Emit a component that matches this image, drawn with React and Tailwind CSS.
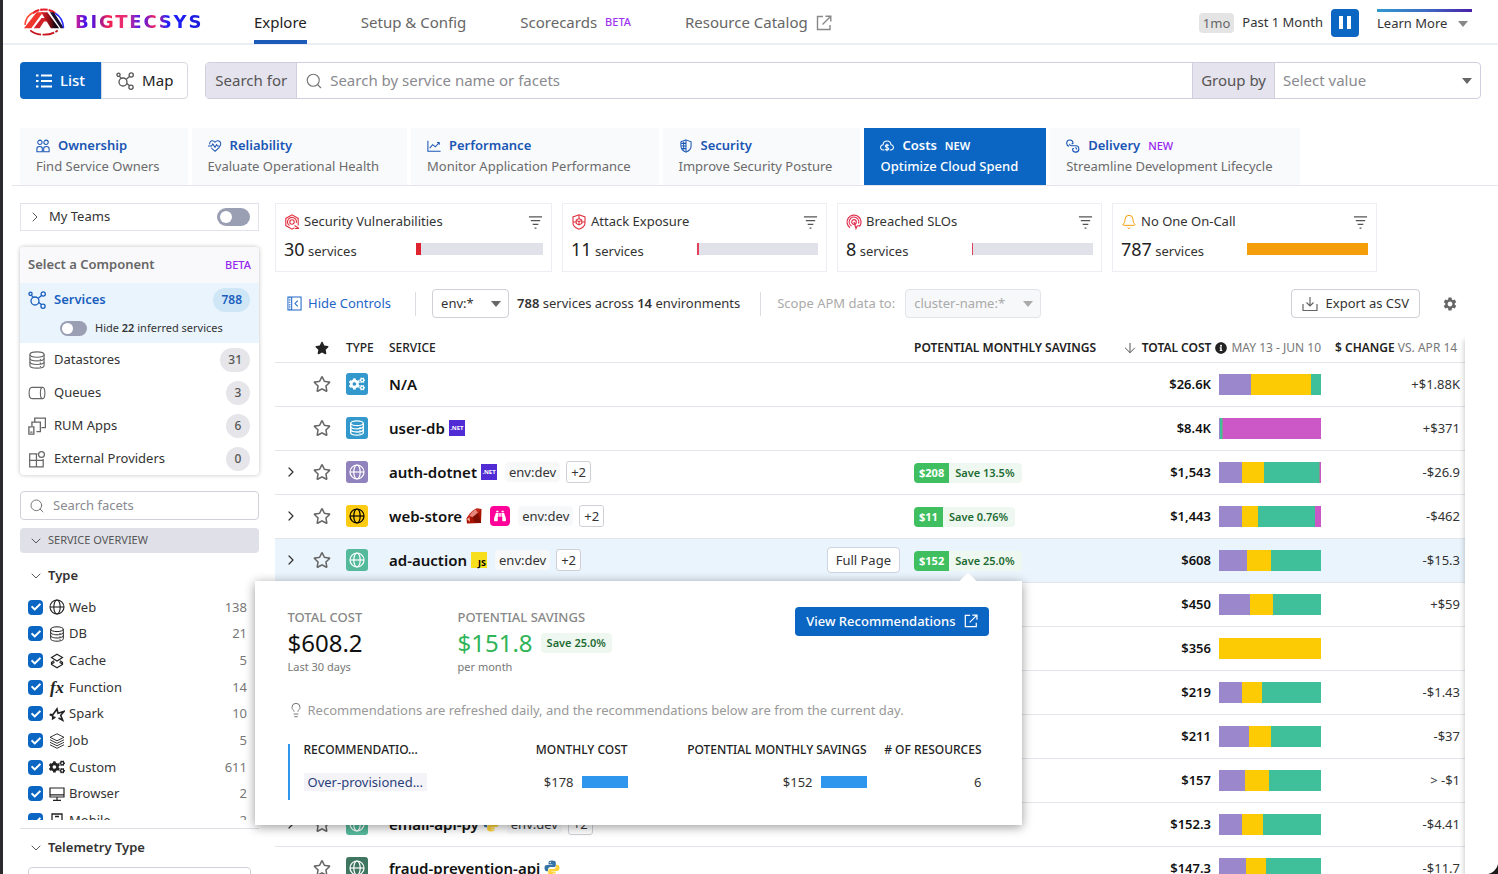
import React from "react";
import { FaCheck, FaStar, FaRegStar, FaBinoculars, FaCogs, FaInfoCircle } from "react-icons/fa";
import { MdSettings } from "react-icons/md";
import {
  ArrowDown,
  Bell,
  ChevronDown,
  ChevronRight,
  Lightbulb,
  Search,
} from "lucide-react";

function Svg({ className = "size-4", box = 16, sw = 1, children }) {
  return (
    <svg
      className={`shrink-0 ${className}`}
      viewBox={`0 0 ${box} ${box}`}
      fill="none"
      stroke="currentColor"
      strokeWidth={sw}
      aria-hidden="true"
    >
      {children}
    </svg>
  );
}

const Globe = (p) => (
  <Svg sw={1.1} {...p}>
    <circle cx="8" cy="8" r="7" />
    <ellipse cx="8" cy="8" rx="3.2" ry="7" />
    <path d="M1 8h14" />
  </Svg>
);

const Disks = (p) => (
  <Svg {...p}>
    <ellipse cx="8" cy="3.2" rx="6.3" ry="2.4" />
    <path d="M1.7 3.2v9.6c0 1.3 2.8 2.4 6.3 2.4s6.3-1.1 6.3-2.4V3.2" />
    <path d="M1.7 6.4c0 1.3 2.8 2.4 6.3 2.4s6.3-1.1 6.3-2.4M1.7 9.6c0 1.3 2.8 2.4 6.3 2.4s6.3-1.1 6.3-2.4" />
    <path d="M11 7v1.3M11 10.3v1.3M11 13.3v1" />
  </Svg>
);

const Nodes = (p) => (
  <Svg box={18} sw={1.3} {...p}>
    <circle cx="7" cy="10" r="4" />
    <circle cx="2.5" cy="2.8" r="1.6" />
    <circle cx="15.2" cy="3" r="2.1" />
    <circle cx="15" cy="15.2" r="2.1" />
    <path d="M3.4 4.2 5 6.5M13.6 4.4 10 7.4M10.7 11.4l2.7 2.2" />
  </Svg>
);

const External = (p) => (
  <Svg sw={1.4} {...p}>
    <path d="M7 1.5H1.5v13h12.5V10" />
    <path d="M6.500 9.500 14.500 1.500M9.500 1.200h5.300v5.300" />
  </Svg>
);

const ListIcon = (p) => (
  <Svg sw={1.8} {...p}>
    <path d="M5 2.5h11M5 8h11M5 13.5h11M0 2.5h2.5M0 8h2.5M0 13.5h2.5" />
  </Svg>
);

const People = (p) => (
  <Svg sw={1.200} {...p}>
    <circle cx="4.5" cy="3.800" r="2.500" />
    <circle cx="11.500" cy="3.800" r="2.500" />
    <path d="M1 14.500V11c0-1.700 1-2.500 3.200-2.500s3 .8 3 2.500v3.500ZM8.800 14.500V11c0-1.700 1-2.500 3-2.500s3.200.8 3.200 2.500v3.500Z" />
  </Svg>
);

const HeartPulse = (p) => (
  <Svg sw={1.200} {...p}>
    <path d="M2 6.2C1.4 3.6 3.2 2 5 2c1.400 0 2.300.8 3 1.700C8.700 2.800 9.600 2 11 2c2.300 0 4.100 2 3.400 4.500C13.700 9.500 10 12.500 8 14 6.800 13 5 11.700 3.600 10" />
    <path d="M0 8h4l1.500-2.300L8 9.500l1.800-3L11 8h2" />
  </Svg>
);

const Trend = (p) => (
  <Svg sw={1.2} {...p}>
    <path d="M1 2v12h14.500M3 10.500l3.500-4 3 2.500L14 4M11.500 4H14v2.500" />
  </Svg>
);

const Shield = (p) => (
  <Svg sw={1.2} {...p}>
    <path d="M8 1 13.800 3.200V8c0 3.500-2.500 5.700-5.800 7-3.300-1.300-5.800-3.500-5.800-7V3.200Z" />
    <path d="M8 1v14M2.500 5H8M2.500 8H8M3.500 11H8M5.300 3v9" />
  </Svg>
);

const CloudCost = (p) => (
  <Svg sw={1.2} {...p}>
    <path d="M5 12.500H3.800a3 3 0 0 1-.3-6C3.800 4 5.700 2.300 8 2.300S12.200 4 12.500 6.500a3 3 0 0 1-.3 6H11" />
    <path d="M10 7.700c-.4-.7-1.100-1-2-1-1.100 0-1.900.5-1.900 1.400 0 2.200 3.900.9 3.900 3 0 .9-.9 1.400-2 1.400-.9 0-1.700-.4-2-1.100M8 5.500v8.500" />
  </Svg>
);

const Loop = (p) => (
  <Svg sw={1.2} {...p}>
    <path d="M3.500 8.200A3.600 3.600 0 1 1 8 4.500c0 1.200-1 1.200-1.500.5M4 5.500C4.200 7 5 7.800 6.500 7.800h4.500a3.600 3.600 0 1 1-3.500 4c0-1.200 1-1.300 1.600-.6" />
    <path d="M12.300 12c0-1.200-.8-2-2-2" />
  </Svg>
);

const Queue = (p) => (
  <Svg {...p}>
    <path d="M3.500 3h9.500c1.100 0 2 2.200 2 5s-.9 5-2 5H3.500C2 13 1 11 1 8s1-5 2.500-5Z" />
    <path d="M13 3c-1.100 0-2 2.200-2 5s.9 5 2 5" />
  </Svg>
);

const Screens = (p) => (
  <Svg sw={1.2} {...p}>
    <path d="M6 4.500V1h9.500v8.500H12M3.500 8V4.500H11v8.500H7.500" />
    <path d="M.8 8.800h4.400v6.400H.8zM2 13.500h2" />
  </Svg>
);

const Blocks = (p) => (
  <Svg sw={1.1} {...p}>
    <path d="M8.500 3.500h-7v11.500h12V8M1.500 9.300h12M7.500 3.500V15" />
    <circle cx="12" cy="4" r="2.600" />
  </Svg>
);

const Cache = (p) => (
  <Svg sw={1.2} {...p}>
    <path d="M8 1.200 13.500 4.600 8 8 2.500 4.600Z" />
    <path d="M5.200 7.700 2.500 9.300v2.200L8 14.800l5.500-3.300V9.300l-2.700-1.600M2.500 11 5.500 9.300M13.500 11l-3-1.700" />
  </Svg>
);

const Spark = (p) => (
  <Svg sw={1.6} {...p}>
    <path d="M.8 8.500 4.200 8.300 8 3l1 4.300 6-1.800-3.300 3.800 2 4.900-4.200-2.200" />
    <path d="M.8 8.500 4 10.200l-.3 2.500 2.700-1.700" />
  </Svg>
);

const Stack = (p) => (
  <Svg sw={0.9} {...p}>
    <path d="M8 .8 15 4.300 8 7.800 1 4.300ZM1 6.800l7 3.500 7-3.500M1 9.300l7 3.500 7-3.500M1 11.800l7 3.500 7-3.500" />
  </Svg>
);

const Monitor = (p) => (
  <Svg sw={1.2} {...p}>
    <path d="M1 2h14v9H1zM1 8.800h14M8 11v3M4 14.300h8" />
  </Svg>
);

const Phone = (p) => (
  <Svg sw={1.3} {...p}>
    <path d="M3 1h10v14H3zM6 3.500h4" />
  </Svg>
);

const HexTarget = (p) => (
  <Svg sw={1.1} {...p}>
    <path d="M10.500 13.800 8 15.200 1.800 11.600V4.400L8 .8l6.200 3.600v7.200" />
    <circle cx="8" cy="8" r="2.200" />
    <path d="m10.500 11.500 4.500 3M11 14.500h4M5.500 11.500A4.400 4.400 0 1 1 12.300 8.800" />
  </Svg>
);

const ShieldBug = (p) => (
  <Svg sw={1.1} {...p}>
    <path d="M8 .8 14 3v6c0 3-2.500 5-6 6.200C4.500 14 2 12 2 9V3Z" />
    <path d="M8 4.500 10.800 6v3.500L8 11l-2.800-1.500V6ZM8 11V8M5.200 6 8 7.800 10.800 6M8 4.500V1M2 8h3M14 8h-3" />
  </Svg>
);

const Target = (p) => (
  <Svg sw={1.2} {...p}>
    <path d="M4 13.800A7 7 0 1 1 13.500 12.500M5.500 12A4.800 4.800 0 1 1 12.500 9.500" />
    <circle cx="8" cy="8" r="2.300" />
    <path d="M8 8l2 6.500 1.200-2.500 2.800-.5" />
  </Svg>
);

const Download = (p) => (
  <Svg sw={1.2} {...p}>
    <path d="M1 8v6.500h14V8M8 1v9M4.500 6.500 8 10l3.500-3.500" />
  </Svg>
);

const HidePanel = (p) => (
  <Svg sw={1.1} {...p}>
    <path d="M1 1h14v14H1zM5 1v14M11.500 5 8.500 8l3 3" />
    <path d="M3 1v14" strokeDasharray="1.500 1" />
  </Svg>
);

const FilterLines = (p) => (
  <Svg sw={1.5} {...p}>
    <path d="M1 2h14M3 6h10M5 10h6M7 14h2" />
  </Svg>
);

const Caret = ({ className = "text-[#666]" }) => (
  <svg className={`w-[10px] shrink-0 ${className}`} viewBox="0 0 10 6" fill="currentColor" aria-hidden="true">
    <path d="M0 0h10L5 6z" />
  </svg>
);

const Python = () => (
  <svg className="size-4 shrink-0" viewBox="0 0 16 16" aria-hidden="true">
    <path fill="#3572a5" d="M8 .5c-2.500 0-3.500.8-3.500 2.200V4.500H8.500V5H3C1.300 5 .5 6.300.5 8s.8 3.200 2.200 3.200H4V9.500C4 8 5.200 7 6.500 7h3.700c1 0 1.600-.8 1.600-1.800V2.700C11.800 1.300 10.500.5 8 .5Z" />
    <path fill="#ffd43b" d="M8 15.500c2.500 0 3.500-.8 3.500-2.200v-1.800H7.500V11H13c1.700 0 2.500-1.300 2.500-3s-.8-3.200-2.200-3.200H12v1.700C12 8 10.800 9 9.500 9H5.800c-1 0-1.600.8-1.600 1.800v2.500c0 1.400 1.300 2.200 3.800 2.200Z" />
    <circle cx="6.200" cy="2.500" r=".7" fill="#fff" />
    <circle cx="9.800" cy="13.500" r=".7" fill="#fff" />
  </svg>
);

const Ruby = () => (
  <svg className="size-4 shrink-0" viewBox="0 0 16 16" aria-hidden="true">
    <path fill="#a91401" d="M10.500.5 15.500 1 15 15 1 15.500.5 10.500Z" />
    <path fill="#c3271b" d="M10.500.5 15.500 1 12 5 7 9 .5 10.500C3 6 6 2 10.500.5Z" />
    <path fill="#f1a79b" d="M9.500 1.500 12 4.500 7 9 3.500 8C5 5 7 2.500 9.500 1.500Z" opacity=".75" />
    <path fill="#7d0f02" d="M7 9l5-4 3 10-7-1Z" />
    <path fill="#f6b5a8" d="m1 11 2.500-1.500.5 4.500Z" />
  </svg>
);

const DotNet = () => (
  <span className="flex size-4 items-center justify-center bg-[#512bd4] text-[6px] font-bold leading-none text-white">.NET</span>
);

const Js = () => (
  <span className="flex size-4 items-end justify-end bg-[#f7df1e] pr-px text-[9px] font-bold leading-[10px] text-black">JS</span>
);

const Binoculars = () => (
  <span className="ml-2 flex size-5 items-center justify-center rounded bg-[#ff0099] text-white">
    <FaBinoculars className="size-3" />
  </span>
);

function Logo() {
  return (
    <a href="#home" className="flex w-[231px] shrink-0 items-center gap-2.5" aria-label="BIGTECSYS home">
      <svg className="h-7 w-[42px]" viewBox="0 0 43 28" aria-hidden="true">
        <defs>
          <linearGradient id="ring" x1="0" x2="1">
            <stop offset="0" stopColor="#e5202a" />
            <stop offset=".45" stopColor="#8e1018" />
            <stop offset=".75" stopColor="#1c0714" />
            <stop offset="1" stopColor="#12061c" />
          </linearGradient>
        </defs>
        <path d="M10 5C13 2.500 17 1.200 21.500 1.200S30 2.500 33 5" fill="none" stroke="#e5202a" strokeWidth="2.200" strokeDasharray="7.500 1" />
        <path d="M7.500 22.500C11 25.500 16 27 21.500 27S32 25.500 35.500 22.500" fill="none" stroke="#c9141f" strokeWidth="1.800" strokeDasharray="12 1.500" />
        <path d="M1 20.500 14 4h6.500L8.500 20.500Z" fill="#f0362c" />
        <path d="M11 20.500 19 10h4l2.500 3.500h-4L17 20.500Z" fill="#d3202a" />
        <path d="M18.500 4H25l12 16.500h-8.500Z" fill="url(#ring)" />
        <path d="M27.500 4h4L42 20.500h-3.500Z" fill="#1b0f2e" />
        <path d="M33 5c5 3 8 8 8.500 15" fill="none" stroke="#2a2cff" strokeWidth="1.600" />
        <path d="M2 17C2.500 11.500 5 7 10 4.500" fill="none" stroke="#ff4a35" strokeWidth="1.600" />
      </svg>
      <span className="bg-[linear-gradient(90deg,#e0208a_0%,#2a10ff_10%,#f01f50_26%,#e8307a_40%,#3a18ff_52%,#f02060_62%,#2020ff_72%,#1b1bd8_100%)] bg-clip-text font-['DejaVu_Sans'] text-lg font-bold leading-5 tracking-widest text-transparent">
        BIGTECSYS
      </span>
    </a>
  );
}

function Header() {
  return (
    <header className="flex h-[45px] shrink-0 items-stretch border-b-2 border-[#eceef5] pl-5 pr-[26px]">
      <Logo />
      <nav className="flex flex-1 items-stretch gap-[54px] text-[15px] text-[#666]">
        <a href="#explore" className="-mb-px flex items-center border-b-4 border-[#1c5cb8] pt-1 text-[#222]">Explore</a>
        <a href="#setup" className="flex items-center pt-0.5">Setup &amp; Config</a>
        <a href="#scorecards" className="flex items-center gap-2 pt-0.5">
          Scorecards <span className="text-[11px] font-medium text-[#a033f0]">BETA</span>
        </a>
        <a href="#catalog" className="flex items-center gap-2 pt-0.5">
          Resource Catalog <External className="size-4 text-[#888]" />
        </a>
      </nav>
      <div className="flex items-center gap-2 pt-0.5 text-[13px] text-[#333]">
        <span className="rounded-sm bg-[#e4e4e4] px-1 leading-5 text-[#666]">1mo</span>
        <span>Past 1 Month</span>
        <button type="button" aria-label="Pause" className="flex size-7 items-center justify-center gap-1 rounded bg-[#0b66c3]">
          <span className="h-[13px] w-1 bg-white" />
          <span className="h-[13px] w-1 bg-white" />
        </button>
        <button type="button" className="ml-2.5 flex h-7 w-[95px] items-center justify-between border-t-[3px] border-[#3a6fc0] pr-1 [border-image:linear-gradient(90deg,#2f9bd0,#3d6cc4,#4a1fa8)_1_/_3px_0_0_0]">
          Learn More <Caret className="text-[#888]" />
        </button>
      </div>
    </header>
  );
}

function Toolbar() {
  return (
    <div className="flex h-[37px] items-stretch gap-[17px] pr-[17px] text-[15px]">
      <div className="flex">
        <button type="button" className="flex items-center gap-2 rounded-l bg-[#0b66c3] px-4 font-medium text-white">
          <ListIcon /> List
        </button>
        <button type="button" className="flex items-center gap-2 rounded-r border border-[#d8d8e2] px-3.5 text-[#222]">
          <Nodes className="size-[18px] text-[#555]" /> Map
        </button>
      </div>
      <div className="flex flex-1 items-stretch rounded border border-[#cfcfdf]">
        <label htmlFor="svc-search" className="flex items-center border-r border-[#cfcfdf] bg-[#e5e3ee] px-[9px] text-[#555]">Search for</label>
        <div className="flex flex-1 items-center gap-[7px] px-2">
          <Search className="size-[18px] text-[#777]" strokeWidth={1.5} />
          <input id="svc-search" className="flex-1 outline-none placeholder:text-[#8a8a90]" placeholder="Search by service name or facets" />
        </div>
        <label htmlFor="group-by" className="flex items-center border-x border-[#cfcfdf] bg-[#e5e3ee] px-2 text-[#555]">Group by</label>
        <div className="grid w-[205px] items-center">
          <select id="group-by" className="col-start-1 row-start-1 h-full appearance-none px-2 text-[#8a8a90] outline-none">
            <option>Select value</option>
          </select>
          <span className="pointer-events-none col-start-1 row-start-1 justify-self-end pr-2"><Caret /></span>
        </div>
      </div>
    </div>
  );
}

const TABS = [
  { name: "Ownership", desc: "Find Service Owners", Icon: People },
  { name: "Reliability", desc: "Evaluate Operational Health", Icon: HeartPulse },
  { name: "Performance", desc: "Monitor Application Performance", Icon: Trend },
  { name: "Security", desc: "Improve Security Posture", Icon: Shield },
  { name: "Costs", desc: "Optimize Cloud Spend", Icon: CloudCost, tag: "NEW", active: true },
  { name: "Delivery", desc: "Streamline Development Lifecycle", Icon: Loop, tag: "NEW" },
];

function Tabs() {
  return (
    <div className="-ml-2 flex gap-1 border-b border-[#e4e6ec] pl-2 text-[13px]">
      {TABS.map(({ name, desc, Icon, tag, active }) => (
        <button
          key={name}
          type="button"
          className={`flex h-[57px] flex-col justify-center pb-px pl-4 pr-7 text-left leading-[21px] ${active ? "bg-[#0b66c3] font-medium text-white" : "bg-[#f9fafc] text-[#6b6b6b]"}`}
        >
          <span className={`flex items-center gap-2 font-semibold ${active ? "text-white" : "text-[#1a56b4]"}`}>
            <Icon className="size-3.5" /> {name}
            {tag && <span className={`text-[11px] ${active ? "" : "font-medium text-[#9526f0]"}`}>{tag}</span>}
          </span>
          <span>{desc}</span>
        </button>
      ))}
    </div>
  );
}

function Switch({ label, small }) {
  return (
    <input
      type="checkbox"
      role="switch"
      aria-label={label}
      className={`shrink-0 appearance-none rounded-full bg-[#9a9fb4] before:block before:rounded-full before:bg-white ${small ? "h-[15px] w-[27px] p-[2px] before:size-[11px]" : "h-[18px] w-[33px] p-[3px] before:size-3"}`}
    />
  );
}

const COMPONENTS = [
  { name: "Datastores", count: 31, Icon: Disks },
  { name: "Queues", count: 3, Icon: Queue },
  { name: "RUM Apps", count: 6, Icon: Screens },
  { name: "External Providers", count: 0, Icon: Blocks },
];

const Fx = () => (
  <span className="w-4 text-center font-['Liberation_Serif'] text-[17px] font-bold italic leading-none">fx</span>
);
const Cogs = () => <FaCogs className="size-4" />;

const TYPES = [
  ["Web", 138, Globe],
  ["DB", 21, Disks],
  ["Cache", 5, Cache],
  ["Function", 14, Fx],
  ["Spark", 10, Spark],
  ["Job", 5, Stack],
  ["Custom", 611, Cogs],
  ["Browser", 2, Monitor],
  ["Mobile", 2, Phone],
];

function Sidebar() {
  return (
    <aside className="w-[239px] shrink-0 text-[13px] text-[#333]">
      <div className="flex h-7 items-center border border-[#e2e3ea] px-2">
        <ChevronRight className="-ml-0.5 size-4 text-[#555]" strokeWidth={1.5} />
        <span className="ml-1.5 flex-1">My Teams</span>
        <Switch label="My Teams" />
      </div>

      <section className="mt-4 overflow-hidden rounded-sm shadow-[0_0_4px_rgba(0,0,0,0.25)]">
        <div className="flex h-9 items-center justify-between bg-[#f9f9fb] px-2">
          <h2 className="font-semibold text-[#666]">Select a Component</h2>
          <span className="text-[11px] font-medium text-[#9526f0]">BETA</span>
        </div>
        <div className="h-[60px] bg-[#eaf4fc] pl-2 pr-[9px]">
          <div className="flex h-[34px] items-center text-[#1a5fbf]">
            <Nodes className="size-[18px]" />
            <span className="ml-2 flex-1 font-semibold">Services</span>
            <span className="rounded-full bg-[#cfe6f7] px-2 text-xs font-semibold leading-6">788</span>
          </div>
          <div className="flex h-[22px] items-center pl-8 text-[11px]">
            <Switch small label="Hide inferred services" />
            <span className="ml-2">Hide <b className="font-semibold">22</b> inferred services</span>
          </div>
        </div>
        <ul>
          {COMPONENTS.map(({ name, count, Icon }) => (
            <li key={name} className="flex h-[33px] items-center pl-2 pr-[9px]">
              <Icon className="size-[18px] text-[#666]" />
              <span className="ml-2 flex-1">{name}</span>
              <span className="min-w-6 rounded-full bg-[#e5e5ea] px-2 text-center text-xs font-medium leading-6 text-[#555]">{count}</span>
            </li>
          ))}
        </ul>
      </section>

      <label className="mt-4 flex h-[29px] items-center gap-2 rounded-sm border border-[#d0d0da] px-2">
        <Search className="size-4 text-[#777]" strokeWidth={1.5} />
        <input aria-label="Search facets" placeholder="Search facets" className="min-w-0 flex-1 outline-none placeholder:text-[#8a8a90]" />
      </label>
      <button type="button" className="mt-2 flex h-[25px] w-full items-center gap-1.5 rounded-sm bg-[#e0e1e8] pl-2 text-[11px] text-[#555]">
        <ChevronDown className="-mr-0.5 size-4" strokeWidth={1.5} /> SERVICE OVERVIEW
      </button>

      <button type="button" className="mt-3 flex h-[22px] items-center gap-1.5 pl-2 font-semibold text-[#333]">
        <ChevronDown className="-mr-0.5 size-4 text-[#555]" strokeWidth={1.5} /> Type
      </button>
      <div className="mt-[7px] h-[226px] overflow-hidden">
        <ul className="grid h-[240px] grid-rows-9 pl-2 pr-3">
          {TYPES.map(([name, count, Icon]) => (
            <li key={name}>
              <label className="flex h-full items-center">
                <span className="grid size-[15px] place-items-center">
                  <input type="checkbox" defaultChecked className="col-start-1 row-start-1 size-[15px] appearance-none rounded-sm bg-[#0b66c3]" />
                  <FaCheck className="pointer-events-none col-start-1 row-start-1 size-2.5 text-white" />
                </span>
                <span className="ml-1.5 mr-1 flex w-4 justify-center text-[#222]"><Icon /></span>
                <span className="flex-1">{name}</span>
                <span className="text-[#777]">{count}</span>
              </label>
            </li>
          ))}
        </ul>
      </div>
      <div className="mt-2 border-t border-[#dfe0e6] pt-2">
        <button type="button" className="flex h-[22px] items-center gap-1.5 pl-2 font-semibold text-[#333]">
          <ChevronDown className="-mr-0.5 size-4 text-[#555]" strokeWidth={1.5} /> Telemetry Type
        </button>
        <label className="mx-2 mt-2 flex h-[29px] items-center gap-2 rounded-sm border border-[#d0d0da] px-2">
          <Search className="size-4 text-[#777]" strokeWidth={1.5} />
          <input aria-label="Search telemetry types" className="min-w-0 flex-1 outline-none" />
        </label>
      </div>
    </aside>
  );
}

const BellIcon = () => <Bell className="size-4" strokeWidth={1.5} />;

const CARDS = [
  { name: "Security Vulnerabilities", value: 30, color: "#e0242f", tone: "text-[#e0303f]", share: 4, Icon: HexTarget },
  { name: "Attack Exposure", value: 11, color: "#e0425a", tone: "text-[#e0303f]", share: 1.4, Icon: ShieldBug },
  { name: "Breached SLOs", value: 8, color: "#e0425a", tone: "text-[#e0304f]", share: 1, Icon: Target },
  { name: "No One On-Call", value: 787, color: "#f59e0b", tone: "text-[#f59e0b]", share: 100, Icon: BellIcon },
];

function Cards() {
  return (
    <div className="mr-[121px] grid grid-cols-[277fr_265fr_265fr_265fr] gap-2.5 text-[13px] text-[#333]">
      {CARDS.map(({ name, value, color, tone, share, Icon }) => (
        <div key={name} className="h-[69px] border border-[#eceef4] px-2 pt-2">
          <div className="flex h-5 items-center gap-1">
            <span className={tone}><Icon className="size-4" /></span>
            <span className="flex-1">{name}</span>
            <button type="button" aria-label={`Filter by ${name}`} className="text-[#555]"><FilterLines className="size-[15px]" /></button>
          </div>
          <div className="mt-1 flex h-[26px] items-center justify-between">
            <span className="leading-6"><span className="text-lg text-[#222]">{value}</span> services</span>
            <span className="h-3 w-[49%] bg-[#e1e2e9]">
              <span className="block h-full" style={{ width: `${share}%`, background: color }} />
            </span>
          </div>
        </div>
      ))}
    </div>
  );
}

function Controls() {
  return (
    <div className="mt-[17px] flex h-[29px] items-center pl-3 pr-[7px] text-[13px] text-[#333]">
      <button type="button" className="flex items-center gap-1.5 text-[#1f66c8]"><HidePanel className="size-[15px]" /> Hide Controls</button>
      <span className="ml-6 h-6 w-px bg-[#dcdde3]" />
      <div className="ml-4 grid w-[77px] items-center self-stretch">
        <select aria-label="Environment" className="col-start-1 row-start-1 h-full appearance-none rounded border border-[#cfcfd6] px-2 outline-none">
          <option>env:*</option>
        </select>
        <span className="pointer-events-none col-start-1 row-start-1 justify-self-end pr-2"><Caret /></span>
      </div>
      <span className="ml-2"><b className="font-semibold">788</b> services across <b className="font-semibold">14</b> environments</span>
      <span className="ml-5 h-6 w-px bg-[#dcdde3]" />
      <label htmlFor="scope" className="ml-4 text-[#aaa]">Scope APM data to:</label>
      <div className="ml-2.5 grid w-[136px] items-center self-stretch">
        <select id="scope" disabled className="col-start-1 row-start-1 h-full appearance-none rounded-sm border border-[#e2e4ea] bg-[#f7f8fa] px-2 text-[#aaa] opacity-100 outline-none">
          <option>cluster-name:*</option>
        </select>
        <span className="pointer-events-none col-start-1 row-start-1 justify-self-end pr-2"><Caret className="text-[#aaa]" /></span>
      </div>
      <span className="flex-1" />
      <button type="button" className="flex items-center gap-2 self-stretch rounded border border-[#cfcfd6] px-2.5"><Download className="size-4 text-[#666]" /> Export as CSV</button>
      <button type="button" aria-label="Settings" className="ml-[22px] text-[#666]"><MdSettings className="size-4" /></button>
    </div>
  );
}

const V = "#9a87cc";
const Y = "#fccb04";
const G = "#40c09a";
const M = "#cc58c8";

const std = (a, b) => [[V, a], [Y, b], [G, 102 - a - b]];

const ROWS = [
  { name: "N/A", tile: "bg-[#3398cb] text-white", kind: "cogs", cost: "$26.6K", bar: [[V, 32], [Y, 60], [G, 10]], change: "+$1.88K" },
  { name: "user-db", tile: "bg-[#3398cb] text-white", kind: "db", badges: [DotNet], cost: "$8.4K", bar: [[V, 1], [G, 2], ["#8f8f8f", 1], [M, 98]], change: "+$371" },
  { name: "auth-dotnet", tile: "bg-[#8f82bd] text-white", open: true, badges: [DotNet], env: true, save: ["$208", "Save 13.5%"], cost: "$1,543", bar: [[V, 23], [Y, 22], [G, 55], ["#8f8f8f", 1], [M, 1]], change: "-$26.9" },
  { name: "web-store", tile: "bg-[#fccb12] text-black", open: true, badges: [Ruby, Binoculars], env: true, save: ["$11", "Save 0.76%"], cost: "$1,443", bar: [[V, 23], [Y, 16], [G, 57], [M, 6]], change: "-$462" },
  { name: "ad-auction", tile: "bg-[#55b99b] text-white", open: true, badges: [Js], env: true, save: ["$152", "Save 25.0%"], cost: "$608", bar: std(28, 24), change: "-$15.3", active: true },
  { name: "ads-service", tile: "bg-[#55b99b] text-white", cost: "$450", bar: std(31, 23), change: "+$59" },
  { name: "storage", tile: "bg-[#55b99b] text-white", cost: "$356", bar: [[Y, 102]], change: "" },
  { name: "checkout", tile: "bg-[#55b99b] text-white", cost: "$219", bar: std(23, 20), change: "-$1.43" },
  { name: "discounts", tile: "bg-[#55b99b] text-white", cost: "$211", bar: std(30, 22), change: "-$37" },
  { name: "orders", tile: "bg-[#55b99b] text-white", cost: "$157", bar: std(26, 24), change: "> -$1" },
  { name: "email-api-py", tile: "bg-[#55b99b] text-white", open: true, badges: [Python], env: true, cost: "$152.3", bar: std(23, 21), change: "-$4.41" },
  { name: "fraud-prevention-api", tile: "bg-[#3f7660] text-white", badges: [Python], cost: "$147.3", bar: std(27, 20), change: "-$11.7" },
];

function Popover() {
  return (
    <div className="absolute right-0 top-full z-20 mt-[10px] w-[767px] bg-white px-[33px] pb-[25px] pt-[26px] font-normal shadow-[0_2px_10px_rgba(0,0,0,0.4)]">
      <span className="absolute -top-1.5 right-[48px] size-3 rotate-45 bg-white" />
      <div className="flex items-start">
        <div className="w-[170px]">
          <div className="text-[13px] font-medium leading-5 text-[#888]">TOTAL COST</div>
          <div className="text-2xl leading-8 text-[#111]">$608.2</div>
          <div className="text-[11px] leading-4 text-[#777]">Last 30 days</div>
        </div>
        <div className="flex-1">
          <div className="text-[13px] font-medium leading-5 text-[#888]">POTENTIAL SAVINGS</div>
          <div className="flex items-center gap-2 text-2xl leading-8 text-[#2fb457]">
            $151.8
            <span className="rounded-sm bg-[#eff8f0] px-1.5 text-[11px] font-semibold leading-5 text-[#1f6b34]">Save 25.0%</span>
          </div>
          <div className="text-[11px] leading-4 text-[#777]">per month</div>
        </div>
        <button type="button" className="flex h-[29px] items-center gap-2 rounded-sm bg-[#0b66c3] px-[11px] text-[13px] font-medium text-white">
          View Recommendations <External className="size-3.5" />
        </button>
      </div>
      <p className="mt-[25px] flex items-center gap-1 text-[13px] leading-5 text-[#999]">
        <Lightbulb className="size-4 text-[#777]" strokeWidth={1.5} />
        Recommendations are refreshed daily, and the recommendations below are from the current day.
      </p>
      <div className="mt-6 border-l-2 border-[#2f96ee] pl-3.5 pr-[7px]">
        <table className="w-full table-fixed text-right text-[13px] text-[#333]">
          <thead>
            <tr className="h-3 text-xs text-[#222]">
              <th className="w-[130px] text-left font-medium leading-3">RECOMMENDATIO...</th>
              <th className="font-medium leading-3">MONTHLY COST</th>
              <th className="w-[239px] font-medium leading-3">POTENTIAL MONTHLY SAVINGS</th>
              <th className="w-[115px] font-medium leading-3"># OF RESOURCES</th>
            </tr>
          </thead>
          <tbody>
            <tr className="h-11">
              <td className="pt-2 text-left"><a href="#over" className="whitespace-nowrap bg-[#f4f3f8] px-1 text-[#2a3f7a]">Over-provisioned...</a></td>
              <td className="pt-2"><span className="inline-flex items-center gap-2">$178 <span className="h-3 w-[46px] bg-[#2f96ee]" /></span></td>
              <td className="pt-2"><span className="inline-flex items-center gap-2">$152 <span className="h-3 w-[46px] bg-[#2f96ee]" /></span></td>
              <td className="pt-2">6</td>
            </tr>
          </tbody>
        </table>
      </div>
    </div>
  );
}

function TileIcon({ kind }) {
  if (kind === "cogs") return <FaCogs className="size-4" />;
  if (kind === "db") return <Disks className="size-4" sw={1.3} />;
  return <Globe className="size-4" sw={1.2} />;
}

function Row({ row }) {
  return (
    <tr className={`h-11 border-t border-[#e4e5ea] leading-5 ${row.active ? "bg-[#eaf4fc]" : ""}`}>
      <td className="text-center">
        {row.open && (
          <button type="button" aria-label={`Expand ${row.name}`} className="mx-auto block"><ChevronRight className="size-4" strokeWidth={1.8} /></button>
        )}
      </td>
      <td>
        <button type="button" aria-label={`Star ${row.name}`} className="mx-auto block text-[#666]"><FaRegStar className="size-[18px]" /></button>
      </td>
      <td className="pl-2">
        <span className={`flex size-[22px] items-center justify-center rounded-[3px] ${row.tile}`}><TileIcon kind={row.kind} /></span>
      </td>
      <td className="pl-2 pr-1.5">
        <div className="flex items-center">
          <a href={`#${row.name}`} className="mr-1 text-[15px] font-semibold text-[#111]">{row.name}</a>
          {row.badges && row.badges.map((B, i) => <B key={i} />)}
          {row.env && (
            <>
              <span className="ml-2 rounded-sm bg-[#f7f8fa] px-1">env:dev</span>
              <button type="button" className="ml-1.5 rounded-[3px] border border-[#cfcfd6] bg-white px-1">+2</button>
            </>
          )}
          {row.active && <button type="button" className="ml-auto rounded-sm border border-[#cfd2e0] bg-white px-2 leading-6">Full Page</button>}
        </div>
      </td>
      <td className="pl-2">
        {row.save && (
          <span className="relative inline-flex items-stretch align-middle text-[11px] font-semibold text-[#1f6b34]">
            <span className="rounded-l-sm bg-[#3fbf5f] px-[5px] font-bold text-white">{row.save[0]}</span>
            <span className="rounded-r-sm bg-[#eff8f0] pl-1.5 pr-[7px]">{row.save[1]}</span>
            {row.active && <Popover />}
          </span>
        )}
      </td>
      <td className="pr-1.5">
        <div className="flex items-center justify-end gap-2">
          <span className="font-semibold text-[#111]">{row.cost}</span>
          <span className="flex h-[21px] w-[102px]">
            {row.bar.map(([color, n], i) => (
              <span key={i} className="h-full" style={{ flexGrow: n, background: color }} />
            ))}
          </span>
        </div>
      </td>
      <td className="pr-[5px] text-right">{row.change}</td>
    </tr>
  );
}

function ServiceTable() {
  return (
    <div className="mt-4 flex min-w-0">
      <table className="min-w-0 flex-1 table-fixed text-[13px] text-[#333]">
        <thead>
          <tr className="h-[28px] whitespace-nowrap text-left text-xs text-[#222]">
            <th className="w-[31px]" aria-label="Expand" />
            <th className="w-8"><FaStar className="mx-auto size-3.5" aria-label="Favourite" /></th>
            <th className="w-[43px] pl-2 font-medium">TYPE</th>
            <th className="pl-2 font-medium">SERVICE</th>
            <th className="w-[202px] pl-2 font-semibold">POTENTIAL MONTHLY SAVINGS</th>
            <th className="w-[219px] pr-1.5 font-semibold">
              <span className="flex items-center justify-end gap-1">
                <ArrowDown className="size-4 text-[#555]" strokeWidth={1.5} /> TOTAL COST
                <FaInfoCircle className="size-3" /> <span className="font-normal text-[#777]">MAY 13 - JUN 10</span>
              </span>
            </th>
            <th className="w-[138px] pl-2 font-semibold">$ CHANGE <span className="font-normal text-[#777]">VS. APR 14</span></th>
          </tr>
        </thead>
        <tbody>
          {ROWS.map((row) => <Row key={row.name} row={row} />)}
        </tbody>
      </table>
      <div className="w-[33px] shrink-0 bg-white shadow-[-1px_6px_5px_rgba(0,0,0,0.2)]" />
    </div>
  );
}

export default function App() {
  return (
    <div className="relative flex h-screen flex-col overflow-hidden border-l-[3px] border-[#2b2b2d] bg-white font-['Noto_Sans',sans-serif]">
      <Header />
      <div className="pl-[17px] pt-[17px]">
        <Toolbar />
        <div className="mt-[29px]"><Tabs /></div>
        <div className="mt-[17px] flex gap-4">
          <Sidebar />
          <main className="min-w-0 flex-1">
            <Cards />
            <div className="pr-[33px]"><Controls /></div>
            <ServiceTable />
          </main>
        </div>
      </div>
      <svg className="absolute bottom-0 right-0 size-2.5" viewBox="0 0 10 10" aria-hidden="true">
        <path d="M10 0v10H0C5 9 9 5 10 0Z" fill="#1a1a1c" />
      </svg>
    </div>
  );
}
